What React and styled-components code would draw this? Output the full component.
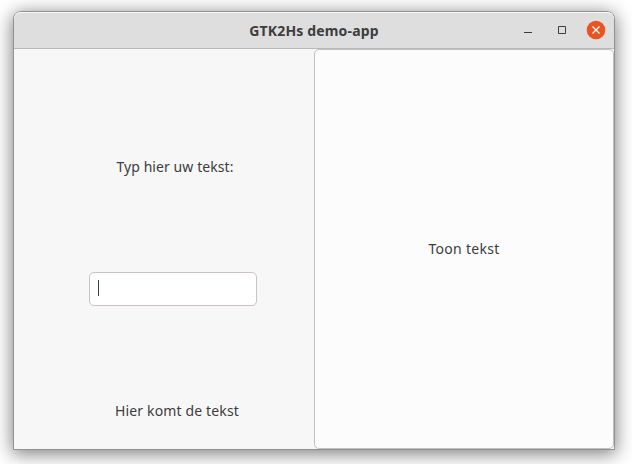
import React from "react";
import styled, { createGlobalStyle } from "styled-components";

const GlobalStyle = createGlobalStyle`
  * { box-sizing: border-box; }
  body {
    margin: 0;
    background: #fff;
    overflow: hidden;
    font-family: "Noto Sans", "Open Sans", sans-serif;
    color: #3d3d3d;
  }
`;

const Desktop = styled.main`
  width: 632px;
  height: 464px;
  padding: 11px 17px 14px 13px;
  overflow: hidden;
`;

const Window = styled.section`
  width: 602px;
  height: 439px;
  display: flex;
  flex-direction: column;
  border: 1px solid #919191;
  border-radius: 8px 8px 0 0;
  background: #f7f7f7;
  box-shadow: 0 3px 18px 1px rgba(0, 0, 0, 0.5);
`;

const TitleBar = styled.header`
  height: 37px;
  flex: none;
  display: grid;
  grid-template-columns: 1fr auto 1fr;
  align-items: center;
  background: #dedede;
  border-bottom: 1px solid #b9b9b9;
  border-radius: 7px 7px 0 0;
  box-shadow: inset 0 1px #f8f8f8;
`;

const Title = styled.h1`
  grid-column: 2;
  margin: 0;
  padding-top: 2px;
  font-size: 14px;
  font-weight: 700;
  line-height: 20px;
  white-space: nowrap;
  letter-spacing: 0.16px;
`;

const Controls = styled.div`
  display: flex;
  justify-content: flex-end;
  gap: 10px;
  padding-right: 6px;
`;

const ControlButton = styled.button`
  width: 24px;
  height: 24px;
  padding: 0;
  border: 0;
  background: none;
  svg { display: block; }
`;

const Content = styled.div`
  flex: 1;
  display: grid;
  grid-template-columns: 300px 300px;
`;

const FormColumn = styled.div`
  display: flex;
  flex-direction: column;
  align-items: center;
  padding-top: 108px;
`;

const Label = styled.span`
  font-size: 14px;
  line-height: 20px;
  white-space: nowrap;
  letter-spacing: ${(p) => p.$spacing || 0}px;
  margin-left: ${(p) => p.$shift || 0}px;
`;

const Entry = styled.div`
  width: 168px;
  height: 34px;
  margin: 95px 0 95px 18px;
  padding: 7px 8px;
  border: 1px solid #cdc3be;
  border-radius: 5px;
  background: #fff;
`;

const Caret = styled.div`
  width: 1px;
  height: 16px;
  background: #3d3d3d;
`;

const ShowButton = styled.button`
  padding: 0;
  border: 1px solid #c0c0c0;
  border-radius: 5px;
  background: #fcfcfc;
  color: inherit;
  font-family: inherit;
`;

export default function App() {
  return (
    <>
      <GlobalStyle />
      <Desktop>
        <Window>
          <TitleBar>
            <Title>GTK2Hs demo-app</Title>
            <Controls>
              <ControlButton aria-label="Minimize">
                <svg width="24" height="24"><path d="M8 14.5h8" stroke="#3d3d3d" /></svg>
              </ControlButton>
              <ControlButton aria-label="Maximize">
                <svg width="24" height="24"><path d="M8.5 8.5h7v7h-7z" fill="none" stroke="#3d3d3d" /></svg>
              </ControlButton>
              <ControlButton aria-label="Close">
                <svg width="24" height="24">
                  <circle cx="12" cy="12" r="9.3" fill="#e95420" />
                  <path d="M8.5 8.5l7 7m0-7l-7 7" stroke="#fff" strokeWidth="1.3" />
                </svg>
              </ControlButton>
            </Controls>
          </TitleBar>
          <Content>
            <FormColumn>
              <Label $spacing={0.08} $shift={22}>Typ hier uw tekst:</Label>
              <Entry><Caret /></Entry>
              <Label $spacing={0.14} $shift={26}>Hier komt de tekst</Label>
            </FormColumn>
            <ShowButton><Label $spacing={0.3}>Toon tekst</Label></ShowButton>
          </Content>
        </Window>
      </Desktop>
    </>
  );
}
